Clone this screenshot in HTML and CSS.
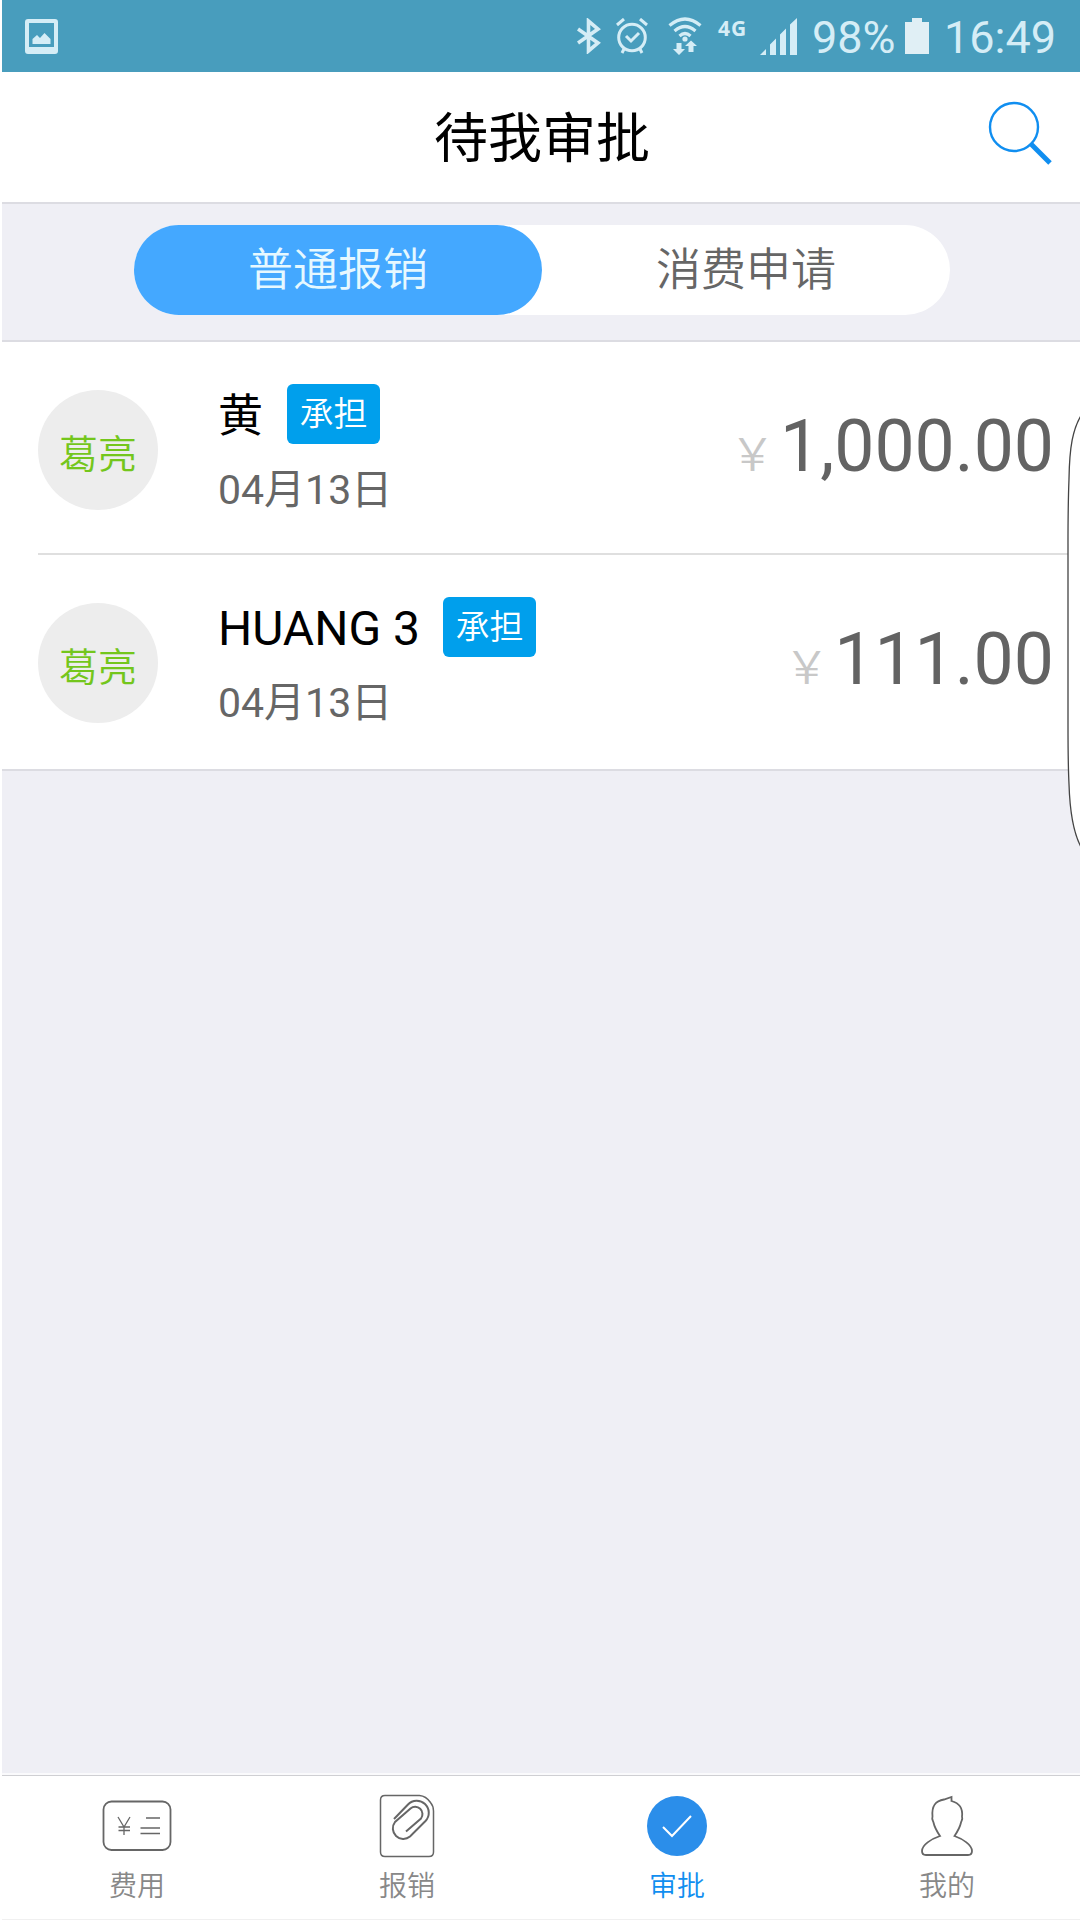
FILE: index.html
```html
<!DOCTYPE html>
<html lang="zh-CN">

<head>
  <meta charset="UTF-8">
  <meta name="viewport" content="width=device-width, initial-scale=1.0">
  <title>待我审批</title>
  <link rel="stylesheet" href="styles.css">
</head>

<body>
  <!-- 状态栏 -->
  <div class="status-bar">
    <svg class="icon-picture" width="34" height="36" viewBox="0 0 34 36">
      <path fill-rule="evenodd" d="M3 0h27a3 3 0 0 1 3 3v29a3 3 0 0 1-3 3H3a3 3 0 0 1-3-3V3a3 3 0 0 1 3-3zM4 4v24h25V4z" />
      <path d="M7.500 25v-5l4.500-4 3 3 4.500-5 6 6v5z" />
    </svg>
    <div class="status-icons">
      <svg class="icon-bluetooth" width="25" height="36" viewBox="0 0 25 36">
        <path d="M1 11l20 14-9.500 8V3L21 11 1 25" fill="none" stroke="#d5edf6" stroke-width="3.600" />
      </svg>
      <svg class="icon-alarm" width="32" height="36" viewBox="0 0 32 36">
        <g fill="none" stroke="#d5edf6" stroke-width="3">
          <circle cx="16" cy="19.500" r="13.300" />
          <path d="M10 18l5 5 8-8M1 7l7-6M31 7l-7-6M8 31l-2 4M24 31l2 4" />
        </g>
      </svg>
      <svg class="icon-wifi" width="34" height="38" viewBox="0 0 34 38">
        <g fill="none" stroke="#d5edf6" stroke-width="3.200">
          <path d="M1.500 8.500q15.500-13 31 0M6.500 14q10.500-9 21 0M11.500 19q5.500-5 11 0" />
        </g>
        <circle cx="17" cy="22" r="2.600" />
        <path d="M8.500 26h5v6h3.500L11 38l-6-6h3.500zM20.500 35v-6H17l6-5.500 6 5.500h-3.500v6z" />
      </svg>
      <span class="network">4G</span>
      <svg class="icon-signal" width="37" height="37" viewBox="0 0 37 37">
        <path d="M0 37h6v-6zM10 37h6V20.500l-6 6zM20 37h6V10.500l-6 6zM30 37h7V0l-7 6.500z" />
      </svg>
      <span class="battery-text">98%</span>
      <svg class="icon-battery" width="24" height="36" viewBox="0 0 24 36">
        <path d="M7 0h10v4h7v32H0V4h7z" fill="#e0eff5" />
      </svg>
      <span class="clock">16:49</span>
    </div>
  </div>

  <!-- 标题栏 -->
  <div class="header">
    <h1 class="title">待我审批</h1>
    <svg class="icon-search" width="64" height="64" viewBox="0 0 64 64">
      <g fill="none" stroke="#108ef0">
        <circle cx="26" cy="26" r="24" stroke-width="2.400" />
        <path d="M43 43l19 19" stroke-width="5" />
      </g>
    </svg>
  </div>

  <!-- 分段切换 -->
  <div class="segment-bar">
    <div class="segment">
      <div class="segment-item active">普通报销</div>
      <div class="segment-item">消费申请</div>
    </div>
  </div>

  <!-- 审批列表 -->
  <div class="list">
    <div class="list-item">
      <div class="avatar">葛亮</div>
      <div class="info">
        <div class="name-row">
          <span class="name name-zh">黄</span>
          <span class="tag">承担</span>
        </div>
        <div class="date">04月13日</div>
      </div>
      <div class="amount"><span class="currency">￥</span>1,000.00</div>
    </div>
    <div class="list-item">
      <div class="avatar">葛亮</div>
      <div class="info">
        <div class="name-row">
          <span class="name">HUANG 3</span>
          <span class="tag">承担</span>
        </div>
        <div class="date">04月13日</div>
      </div>
      <div class="amount"><span class="currency">￥</span>111.00</div>
    </div>
  </div>

  <!-- 底部导航 -->
  <div class="tab-bar">
    <div class="tab">
      <svg width="70" height="64" viewBox="0 0 70 64">
        <g fill="none" stroke="#666">
          <rect x="1.500" y="7.500" width="67" height="48.500" rx="8" stroke-width="1.800" />
          <path d="M16 23l6 10 6-10M22 33v8M16.500 33h11.500M16.500 36.500h11.500M44 24h14M38.500 34h19.500M38.500 39.500h19.500" stroke-width="1.300" />
        </g>
      </svg>
      <span>费用</span>
    </div>
    <div class="tab">
      <svg width="56" height="64" viewBox="0 0 56 64">
        <g fill="none" stroke="#666">
          <path d="M6 1.500h34.500Q47 2 51.500 8.500 54.500 12 54.500 17v41q0 4.500-4.500 4.500H6q-4.500 0-4.500-4.500V6q0-4.500 4.500-4.500z" stroke-width="1.500" />
          <path d="M15 25L29 10.500A12 12 0 0 1 46.500 27L31 42.500A10.500 10.500 0 0 1 16 28L31.500 14.500A7.300 7.300 0 0 1 42 24.500L27 37.500" stroke-width="2" />
        </g>
      </svg>
      <span>报销</span>
    </div>
    <div class="tab active">
      <svg width="60" height="64" viewBox="0 0 60 64">
        <circle cx="30" cy="32" r="30" fill="#2b8eea" />
        <path d="M16 33l9 9 19-20" fill="none" stroke="#fff" stroke-width="2" />
      </svg>
      <span>审批</span>
    </div>
    <div class="tab">
      <svg width="52" height="64" viewBox="0 0 52 64">
        <path d="M30.500 3v4C38 9 42 14 41 22.500c1 3-.5 4-1 6-1 5-3.500 9-6.500 13.500 8.500 3 17.500 9 17.500 15 0 3-1 4-4 4H5c-3 0-4-1-4-4 0-6 9-12 18-15-3-4.500-5.500-8.500-6.500-13.500-.5-2-2-3-1-6C10.500 12 14 7 23 5.500z" fill="none" stroke="#666" stroke-width="1.800" />
      </svg>
      <span>我的</span>
    </div>
  </div>

  <!-- 侧屏拉手 -->
  <svg class="edge-handle" width="13" height="436" viewBox="0 0 13 436">
    <path d="M14 1.500C6 15 2.500 32 2 65Q1 90 1 130V310Q1 350 2 370C3 403 7 420 14 433z" fill="#fff" />
    <path d="M14 1.500C6 15 2.500 32 2 65Q1 90 1 130V310Q1 350 2 370C3 403 7 420 14 433" fill="none" stroke="#444" stroke-width="1.300" />
  </svg>
</body>

</html>
```
FILE: styles.css
```css
/* 整体布局 */
* {
  box-sizing: border-box;
}

body {
  position: relative;
  display: flex;
  flex-direction: column;
  width: 1080px;
  height: 1920px;
  margin: 0;
  border-left: 2px solid #fff;
  background-color: #efeff5;
  font-family: Roboto, "Noto Sans CJK SC", sans-serif;
  font-weight: 350;
  overflow: hidden;
}

svg {
  display: block;
  flex-shrink: 0;
}

/* 状态栏 */
.status-bar {
  display: flex;
  justify-content: space-between;
  height: 72px;
  padding: 0 24px 0 23px;
  background-color: #489dbd;
  color: #d5edf6;
  fill: #d5edf6;
}

.icon-picture {
  margin-top: 19px;
}

.status-icons {
  display: flex;
}

.icon-bluetooth {
  margin-top: 18px;
}

.icon-alarm {
  margin: 18px 0 0 14px;
}

.icon-wifi {
  margin: 17px 0 0 20px;
}

.network {
  width: 31px;
  margin: 14px 0 0 16px;
  font: 700 21px/28px "Open Sans", sans-serif;
  letter-spacing: 1px;
}

.icon-signal {
  margin: 18px 0 0 11px;
}

.battery-text,
.clock {
  font-size: 45px;
  font-weight: 400;
  line-height: 76px;
}

.battery-text {
  width: 93px;
  margin-left: 15px;
}

.icon-battery {
  margin: 18px 15px 0 0;
}

/* 标题栏 */
.header {
  position: relative;
  height: 132px;
  border-bottom: 2px solid #dcdce2;
  background-color: #fff;
}

.title {
  margin: 0;
  padding-left: 2px;
  font-size: 54px;
  font-weight: 400;
  line-height: 135px;
  text-align: center;
}

.icon-search {
  position: absolute;
  top: 29px;
  right: 28px;
}

/* 分段切换 */
.segment-bar {
  height: 138px;
  padding: 21px 128px 0 132px;
  border-bottom: 2px solid #dcdce2;
}

.segment {
  display: flex;
  width: 816px;
  height: 90px;
  border-radius: 45px;
  background-color: #fff;
}

.segment-item {
  flex: 1;
  border-radius: 45px;
  color: #666;
  font-size: 45px;
  line-height: 92px;
  text-align: center;
}

.segment-item.active {
  background-color: #44a8ff;
  color: #e6f8ff;
}

/* 审批列表 */
.list {
  padding-left: 36px;
  border-bottom: 2px solid #dcdce2;
  background-color: #fff;
}

.list-item {
  display: flex;
  height: 213px;
  padding-right: 26px;
}

.list-item:first-child {
  border-bottom: 2px solid #dfdfdf;
}

.list-item:last-child {
  height: 214px;
}

.avatar {
  width: 120px;
  height: 120px;
  margin-top: 48px;
  padding-top: 8px;
  border-radius: 50%;
  background-color: #ededed;
  color: #74c61c;
  font-size: 39px;
  line-height: 114px;
  text-align: center;
}

.info {
  margin: 42px 0 0 60px;
}

.name-row {
  display: flex;
  height: 60px;
}

.name {
  font-size: 48px;
  font-weight: 400;
  line-height: 64px;
}

.name-zh {
  width: 46px;
  font-size: 45px;
  line-height: 66px;
}

.tag {
  width: 93px;
  margin-left: 23px;
  border-radius: 6px;
  background-color: #009fec;
  color: #fff;
  font-size: 34px;
  line-height: 61px;
  text-align: center;
}

.date {
  margin-top: 18px;
  color: #666;
  font-size: 41px;
  font-weight: 400;
  line-height: 56px;
}

.amount {
  margin: 63px 0 0 auto;
  color: #636363;
  font-size: 71.5px;
  font-weight: 400;
  line-height: 84px;
}

.currency {
  margin-right: 5px;
  color: #c8c8c8;
  font-family: "Noto Sans CJK SC", sans-serif;
  font-size: 45px;
  font-weight: 350;
  line-height: 1;
}

/* 底部导航 */
.tab-bar {
  display: flex;
  height: 147px;
  margin-top: auto;
  border-top: 2px solid #fafafc;
  border-bottom: 1px solid #f0f0f0;
  background-color: #fff;
  box-shadow: inset 0 1px 0 #cfcfd3;
}

.tab {
  flex: 0 0 270px;
  display: flex;
  flex-direction: column;
  align-items: center;
  padding-top: 19px;
  color: #888;
  font-size: 28px;
  line-height: 36px;
}

.tab span {
  margin-top: 11px;
}

.tab.active {
  color: #108ef0;
}

/* 侧屏拉手，盖在列表上 */
.edge-handle {
  position: absolute;
  top: 414px;
  right: 0;
}
```
